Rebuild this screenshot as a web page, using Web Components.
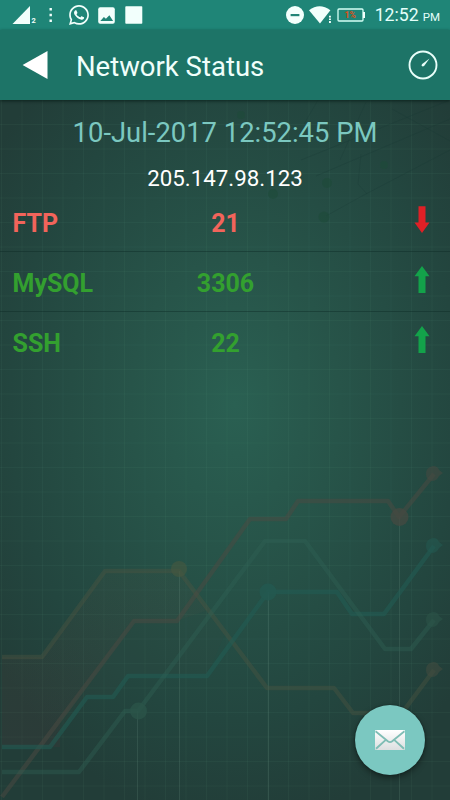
<!DOCTYPE html>
<html lang="en">
<head>
<meta charset="utf-8">
<title>Network Status</title>
<style>
    body {
        margin: 0;
        height: 100vh;
        overflow: hidden;
        font-family: Roboto, 'Noto Sans', sans-serif;
    }
</style>
</head>
<body>
<network-app></network-app>

<script>
/**
 * <status-bar>
 * Android system bar: notifications on the left, radio / battery / clock on the right
 */
class StatusBar extends HTMLElement {
    constructor() {
        super()
        this.attachShadow({ mode: 'open' })
        this.shadowRoot.innerHTML = `
        <style>
        :host {
            display: flex;
            justify-content: space-between;
            height: 30px;
            box-sizing: border-box;
            padding: 0 10px 0 12px;
            background: #1f8577;
            color: #e4fffa;
        }
        svg { display: block; fill: #f2fffc; }
        .side { display: flex; align-items: center; }
        .signal { margin-right: 12px; }
        .dots { margin-right: 16px; }
        .chat { margin-right: 9px; }
        .photo { margin-right: 9px; }
        .dnd { margin-right: 5px; }
        .wifi { margin-right: 5px; }
        .battery { margin-right: 9px; }
        .time { font-size: 17.7px; line-height: 30px; padding-top: 2px; white-space: nowrap; }
        .time small { font-size: 11.5px; margin-left: 4px; }
        </style>
        <div class="side">
            <svg class="signal" width="25" height="20" viewBox="0 0 25 20">
                <path d="M18 1v18H.5z"/>
                <text x="19.500" y="18.300" font-size="7.500" font-weight="700">2</text>
            </svg>
            <svg class="dots" width="4" height="16" viewBox="0 0 4 16">
                <path d="M.5 1h2.400v2.400H.5zM.5 6.800h2.400v2.400H.5zM.5 12.500h2.400v2.400H.5z"/>
            </svg>
            <svg class="chat" width="20" height="20" viewBox="0 0 24 24">
                <path d="M17.5 14.4c-.3-.15-1.76-.87-2.03-.97-.27-.1-.47-.15-.67.15-.2.3-.77.97-.94 1.16-.17.2-.35.22-.64.08-.3-.15-1.26-.46-2.4-1.48-.88-.79-1.48-1.76-1.65-2.06-.17-.3 0-.46.13-.6.13-.14.3-.35.45-.52.15-.18.2-.3.3-.5.1-.2.05-.37-.03-.52-.07-.15-.67-1.61-.91-2.2-.24-.58-.49-.5-.67-.51h-.57c-.2 0-.52.07-.8.37-.27.3-1.04 1.02-1.04 2.48s1.07 2.87 1.22 3.07c.14.2 2.1 3.2 5.07 4.49 2.5 1 3 .8 3.57.75.55-.05 1.76-.72 2-1.41.25-.7.25-1.29.18-1.42-.07-.12-.27-.2-.57-.35zM12 0C5.5 0 .2 5.3.2 11.9c0 2.1.5 4.1 1.6 5.9L0 24l6.3-1.7c1.7 1 3.7 1.5 5.7 1.5 6.6 0 11.9-5.3 11.9-11.9S18.6 0 12 0zm0 21.7c-1.8 0-3.5-.5-5-1.4l-.4-.2-3.7 1 1-3.6-.2-.4c-1-1.6-1.5-3.4-1.5-5.2C2.2 6.4 6.600 2 12 2s9.900 4.400 9.900 9.900-4.500 9.800-9.900 9.800z"/>
            </svg>
            <svg class="photo" width="18" height="17" viewBox="0 0 18 17">
                <rect x=".2" y=".2" width="16.600" height="16.600" rx="2"/>
                <path fill="#1f8577" d="M2.300 14l3.600-4 2 1.700 3.500-3.500 3.700 5.800z"/>
            </svg>
            <svg width="18" height="18" viewBox="0 0 18 18">
                <rect x=".3" y=".3" width="17" height="17.400" rx=".8"/>
            </svg>
        </div>
        <div class="side">
            <svg class="dnd" width="18" height="18" viewBox="0 0 18 18">
                <circle cx="9" cy="9" r="9"/>
                <rect x="4.600" y="8" width="8.800" height="2.200" fill="#1f8577"/>
            </svg>
            <svg class="wifi" width="23" height="18" viewBox="0 0 23 18">
                <path d="M0 4.300Q10.500-3.800 21.400 4.300L11 17.600z"/>
                <path d="M18.800 8.800h4.200V18h-4.200z" fill="#1f8577"/>
                <path d="M20 9.700h1.900v1.900H20zM20 12.600h1.900v1.400H20zM20 15h1.900v1.900H20z"/>
            </svg>
            <svg class="battery" width="29" height="14" viewBox="0 0 29 14">
                <rect x="1" y="1" width="25" height="12" rx="1" fill="none" stroke="#d5fff6" stroke-width="1.300"/>
                <path d="M26 4h2v6h-2z"/>
                <text x="7.500" y="10" font-size="8.500" font-weight="900" fill="#cf5522">1%</text>
            </svg>
            <div class="time">12:52<small>PM</small></div>
        </div>
        `
    }
}
customElements.define('status-bar', StatusBar)

/**
 * <app-toolbar>
 * back arrow, slotted title and the speed test action
 */
class AppToolbar extends HTMLElement {
    constructor() {
        super()
        this.attachShadow({ mode: 'open' })
        this.shadowRoot.innerHTML = `
        <style>
        :host {
            display: flex;
            align-items: center;
            height: 70px;
            box-sizing: border-box;
            padding: 0 12px 0 22px;
            background: #1d7467;
            box-shadow: 0 1px 3px rgba(0, 20, 15, 0.7);
            color: #f0fffb;
        }
        svg { display: block; }
        .title {
            flex: 1;
            margin-left: 28px;
            font-size: 27.5px;
            line-height: 32px;
            padding-top: 3px;
            white-space: nowrap;
        }
        </style>
        <svg width="26" height="30" viewBox="0 0 26 30"><path d="M25.500 1v28L.6 15z" fill="#fff"/></svg>
        <div class="title"><slot></slot></div>
        <svg width="30" height="30" viewBox="0 0 30 30">
            <circle cx="15" cy="15" r="13.500" fill="none" stroke="#e9fffa" stroke-width="1.900"/>
            <path d="M21.500 8.600l-5.200 7.200q-1.500 1.300-2.400.3-.9-1 .3-2.200z" fill="#e9fffa"/>
        </svg>
        `
    }
}
customElements.define('app-toolbar', AppToolbar)

/**
 * <service-row name port state="up|down">
 */
class ServiceRow extends HTMLElement {
    constructor() {
        super()
        this.attachShadow({ mode: 'open' })
    }

    connectedCallback() {
        this.render()
    }

    render() {
        const up = this.getAttribute('state') === 'up'
        const arrow = up
            ? 'M8 0l7.500 10.200h-4V27h-7V10.200h-4z'
            : 'M8 27l7.500-10.600h-4V.3h-7v16.100h-4z'

        this.shadowRoot.innerHTML = `
        <style>
        :host {
            display: grid;
            grid-template-columns: 1fr 1fr 1fr;
            align-items: center;
            height: 60px;
            box-sizing: border-box;
            padding: 0 19.5px 0 12.5px;
            border-bottom: 1px solid rgba(10, 40, 36, 0.4);
            color: ${up ? '#33a02f' : '#f2645b'};
            font-size: 25px;
            font-weight: 700;
            line-height: 30px;
        }
        :host(:last-of-type) { border-bottom-color: transparent; }
        .port { text-align: center; margin-left: 8px; }
        span { padding-top: 5px; }
        svg { display: block; justify-self: end; margin-bottom: 5px; }
        </style>
        <span>${this.getAttribute('name')}</span>
        <span class="port">${this.getAttribute('port')}</span>
        <svg width="16" height="27" viewBox="0 0 16 27"><path d="${arrow}" fill="${up ? '#13a24a' : '#df2026'}"/></svg>
        `
    }
}
customElements.define('service-row', ServiceRow)

/**
 * <chart-backdrop>
 * faint grid, circuit traces and line charts behind the content
 */
class ChartBackdrop extends HTMLElement {
    constructor() {
        super()
        this.attachShadow({ mode: 'open' })
        this.render()
    }

    grid() {
        let lines = ''
        for (let x = 1.5; x < 450; x += 20.5) {
            lines += `<path d="M${x} 100V800"/>`
        }
        for (let y = 100; y < 800; y += 24.5) {
            lines += `<path d="M0 ${y}H450"/>`
        }
        return lines
    }

    render() {
        this.shadowRoot.innerHTML = `
        <style>
        :host { display: block; }
        svg { display: block; width: 100%; height: 100%; }
        </style>
        <svg viewBox="0 0 450 800">
            <defs>
                <radialGradient id="glow" gradientUnits="userSpaceOnUse" cx="0" cy="0" r="1" gradientTransform="translate(235 405) scale(300 420)">
                    <stop offset="0" stop-color="#2a6052"/>
                    <stop offset=".35" stop-color="#275449"/>
                    <stop offset=".75" stop-color="#23463f"/>
                    <stop offset="1" stop-color="#223d38"/>
                </radialGradient>
                <linearGradient id="area" x1="0" y1="0" x2="0" y2="1">
                    <stop offset="0" stop-color="#6a4a38" stop-opacity=".08"/>
                    <stop offset="1" stop-color="#5a3038" stop-opacity=".16"/>
                </linearGradient>
            </defs>
            <rect width="450" height="800" fill="url(#glow)"/>
            <g fill="none" stroke="#6fb39c" stroke-opacity=".06">${this.grid()}</g>
            <g fill="none" stroke="#173832" stroke-opacity=".25">
                <path d="M301 160L450 100M316 176L450 119M326 216L362 196 450 150M361 154L358 184 367 194M392 109L450 141M304 124L318 100M340 160L366 102"/>
            </g>
            <g fill="#1e4a38" fill-opacity=".55">
                <circle cx="324" cy="217" r="5.500"/><circle cx="327" cy="183" r="5"/><circle cx="273" cy="194" r="5"/><circle cx="241" cy="115" r="4"/><circle cx="384" cy="165" r="4"/>
            </g>
            <path d="M2 657H42L105 571H179L208 610 177 621H134L60 720V747H2z" fill="url(#area)"/>
            <path d="M134 621H177L208 610 225 633 207 676H128L113 697H87L60 735V718z" fill="#3c4a42" fill-opacity=".14"/>
            <g stroke="#78a08f" stroke-opacity=".18">
                <path d="M137.500 711V800M179.500 571V800M268.500 592V800M399.500 517V800"/>
            </g>
            <g fill="none" stroke-width="4.500" stroke-linejoin="round">
                <path d="M2 657H42L105 571H179L267 688H334L353 713H402L434 670" stroke="#4e5540" stroke-opacity=".4"/>
                <path d="M2 797L134 621H177L250 519H286L298 501H388L399 517L434 474" stroke="#4c4a41" stroke-opacity=".5"/>
                <path d="M2 747H50L87 697H113L128 676H207L268 592H337L352 614H384L434 546" stroke="#215b53" stroke-opacity=".6"/>
                <path d="M2 772H79L125 711H138L265 541H305L385 649H411L434 620" stroke="#2f6256" stroke-opacity=".4"/>
            </g>
            <g>
                <g fill="#414b40" fill-opacity=".6"><path d="M426 670q0-7 7-8 5 0 6 4l4 3-4 3q-2 5-7 5-6-1-6-7z"/><circle cx="179" cy="569" r="8" fill="#48593f"/></g>
                <g fill="#454a41" fill-opacity=".75"><circle cx="399.500" cy="517" r="9"/><path d="M426 474q0-7 7-8 5 0 6 4l4 3-4 3q-2 5-7 5-6-1-6-7z" fill-opacity=".6"/></g>
                <g fill="#235950" fill-opacity=".8"><circle cx="268" cy="592" r="8.500"/><path d="M426 546q0-7 7-8 5 0 6 4l4 3-4 3q-2 5-7 5-6-1-6-7z" fill-opacity=".6"/></g>
                <g fill="#2b5448" fill-opacity=".8"><circle cx="138.500" cy="711" r="8.500"/><path d="M426 620q0-7 7-8 5 0 6 4l4 3-4 3q-2 5-7 5-6-1-6-7z" fill-opacity=".6"/></g>
            </g>
        </svg>
        `
    }
}
customElements.define('chart-backdrop', ChartBackdrop)

/**
 * <mail-fab>
 * floating mail button
 */
class MailFab extends HTMLElement {
    constructor() {
        super()
        this.attachShadow({ mode: 'open' })
        this.shadowRoot.innerHTML = `
        <style>
        :host { display: block; }
        button {
            display: flex;
            align-items: center;
            justify-content: center;
            width: 70px;
            height: 70px;
            padding: 0;
            border: none;
            border-radius: 50%;
            background: #7bc8c1;
            box-shadow: 0 3px 6px rgba(0, 0, 0, 0.4), 0 0 2px rgba(0, 0, 0, 0.4);
        }
        </style>
        <button aria-label="Mail">
            <svg width="30" height="20" viewBox="0 0 30 20">
                <defs>
                    <linearGradient id="paper" x1="0" y1="0" x2="0" y2="1">
                        <stop offset="0" stop-color="#fff"/>
                        <stop offset="1" stop-color="#dcdfe0"/>
                    </linearGradient>
                </defs>
                <rect width="30" height="20" rx="1" fill="url(#paper)"/>
                <path d="M.5 1.300l12.300 10q2.200 1.600 4.400 0l12.300-10M1 18.800l9.800-8.900M29 18.800l-9.800-8.900" fill="none" stroke="#7fbdb5" stroke-width="1.900"/>
            </svg>
        </button>
        `
    }
}
customElements.define('mail-fab', MailFab)

/**
 * <network-app>
 * the whole screen
 */
class NetworkApp extends HTMLElement {
    constructor() {
        super()
        this.attachShadow({ mode: 'open' })
        this.shadowRoot.innerHTML = `
        <style>
        :host {
            display: flex;
            flex-direction: column;
            position: relative;
            height: 100%;
            isolation: isolate;
        }
        chart-backdrop {
            position: absolute;
            inset: 0;
            z-index: -1;
        }
        main { flex: 1; text-align: center; }
        .date {
            padding-top: 16px;
            font-size: 27.4px;
            line-height: 34px;
            color: #7bc8c0;
        }
        .ip {
            padding-top: 11px;
            height: 31px;
            font-size: 22.3px;
            line-height: 35px;
            color: #fff;
        }
        .rows { text-align: left; }
        mail-fab {
            position: absolute;
            right: 25px;
            bottom: 25px;
        }
        </style>
        <chart-backdrop></chart-backdrop>
        <status-bar></status-bar>
        <app-toolbar>Network Status</app-toolbar>
        <main>
            <div class="date">10-Jul-2017 12:52:45 PM</div>
            <div class="ip">205.147.98.123</div>
            <div class="rows">
                <service-row name="FTP" port="21" state="down"></service-row>
                <service-row name="MySQL" port="3306" state="up"></service-row>
                <service-row name="SSH" port="22" state="up"></service-row>
            </div>
        </main>
        <mail-fab></mail-fab>
        `
    }
}
customElements.define('network-app', NetworkApp)
</script>
</body>
</html>
